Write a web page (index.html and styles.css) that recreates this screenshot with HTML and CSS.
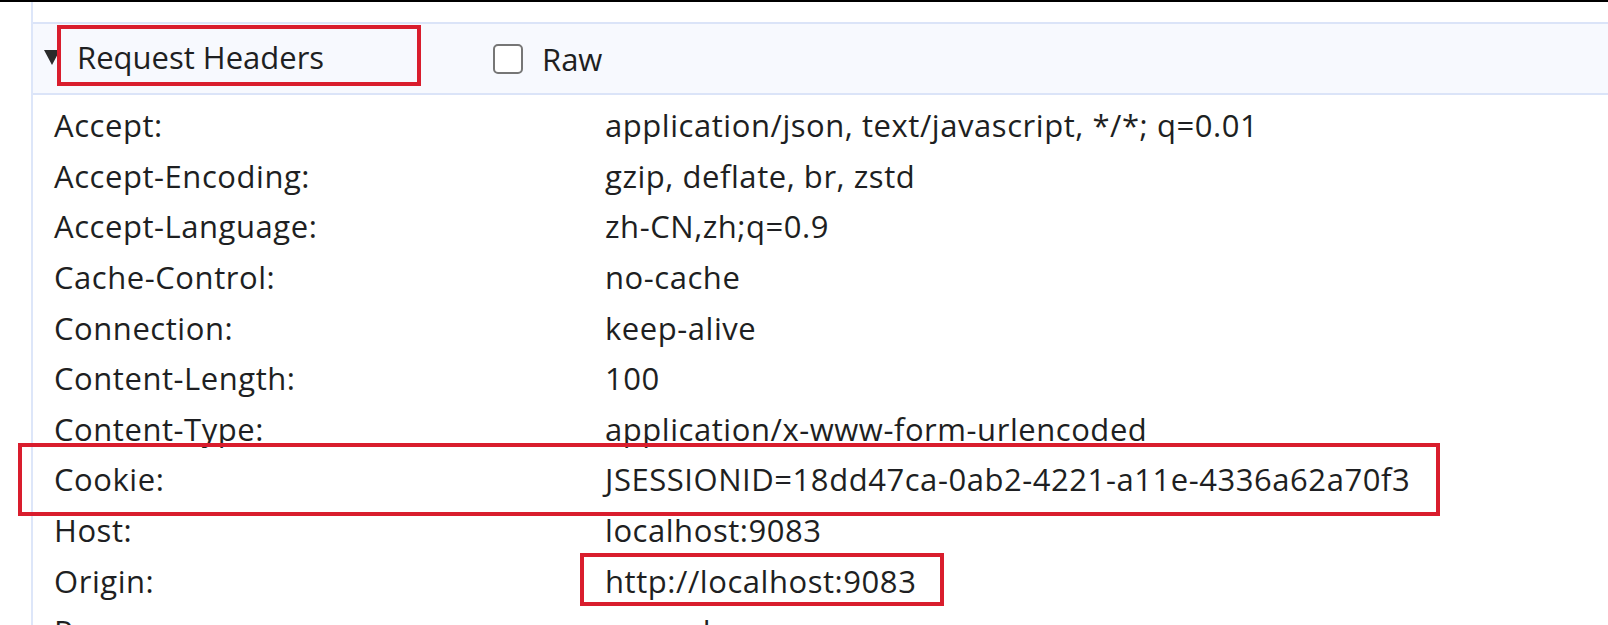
FILE: index.html
```html
<!DOCTYPE html>
<html lang="en">
<head>
<meta charset="utf-8">
<title>Request Headers</title>
<link rel="stylesheet" href="styles.css">
</head>
<body>
<div class="page">
  <div class="topline"></div>
  <div class="panel">
    <div class="section-head">
      <span class="caret"></span>
      <span class="title">Request Headers</span>
      <label class="raw"><span class="checkbox"></span><span>Raw</span></label>
    </div>
    <div class="rows">
      <div class="row"><span class="name">Accept:</span><span class="value">application/json, text/javascript, */*; q=0.01</span></div>
      <div class="row"><span class="name">Accept-Encoding:</span><span class="value">gzip, deflate, br, zstd</span></div>
      <div class="row"><span class="name">Accept-Language:</span><span class="value">zh-CN,zh;q=0.9</span></div>
      <div class="row"><span class="name">Cache-Control:</span><span class="value">no-cache</span></div>
      <div class="row"><span class="name">Connection:</span><span class="value">keep-alive</span></div>
      <div class="row"><span class="name">Content-Length:</span><span class="value">100</span></div>
      <div class="row"><span class="name">Content-Type:</span><span class="value">application/x-www-form-urlencoded</span></div>
      <div class="row"><span class="name">Cookie:</span><span class="value">JSESSIONID=18dd47ca-0ab2-4221-a11e-4336a62a70f3</span></div>
      <div class="row"><span class="name">Host:</span><span class="value">localhost:9083</span></div>
      <div class="row"><span class="name">Origin:</span><span class="value">http://localhost:9083</span></div>
      <div class="row"><span class="name">Pragma:</span><span class="value">no-cache</span></div>
    </div>
  </div>
  <div class="mark mark-title"></div>
  <div class="mark mark-cookie"></div>
  <div class="mark mark-origin"></div>
</div>
</body>
</html>
```
FILE: styles.css
```css
html, body {
  margin: 0;
  padding: 0;
  background: #fff;
}
.page {
  position: relative;
  width: 1608px;
  height: 625px;
  overflow: hidden;
  font-family: "Open Sans", "Liberation Sans", sans-serif;
  font-size: 31px;
  letter-spacing: 0.55px;
  color: #1e1f22;
}
.topline {
  height: 2px;
  background: #000;
}
.panel {
  margin-left: 31px;
  border-left: 2px solid #dde6f9;
  padding-top: 20px;
  height: 700px;
}
.section-head {
  display: flex;
  align-items: center;
  height: 69px;
  background: #f7f9fe;
  border-top: 2px solid #dbe4f8;
  border-bottom: 2px solid #dbe4f8;
  padding-left: 11px;
}
.caret {
  width: 0;
  height: 0;
  border-left: 8px solid transparent;
  border-right: 8px solid transparent;
  border-top: 15px solid #2b2b2b;
  margin-right: 17px;
  margin-top: -2px;
}
.title {
  width: 416px;
  margin-top: -4px;
  letter-spacing: 0;
}
.raw {
  display: flex;
  align-items: center;
  letter-spacing: 0;
}
.checkbox {
  width: 26px;
  height: 26px;
  border: 2px solid #767676;
  border-radius: 5px;
  background: #fff;
  margin-right: 19px;
}
.rows {
  padding-top: 5px;
  padding-left: 21px;
}
.row {
  display: grid;
  grid-template-columns: 551px 1fr;
  height: 50.6px;
  align-items: center;
  white-space: nowrap;
}
.mark {
  position: absolute;
  border: 4px solid #d91d2d;
}
.mark-title {
  left: 57px;
  top: 25px;
  width: 356px;
  height: 53px;
}
.mark-cookie {
  left: 18px;
  top: 443px;
  width: 1414px;
  height: 65px;
}
.mark-origin {
  left: 580px;
  top: 553px;
  width: 356px;
  height: 45px;
}
```
